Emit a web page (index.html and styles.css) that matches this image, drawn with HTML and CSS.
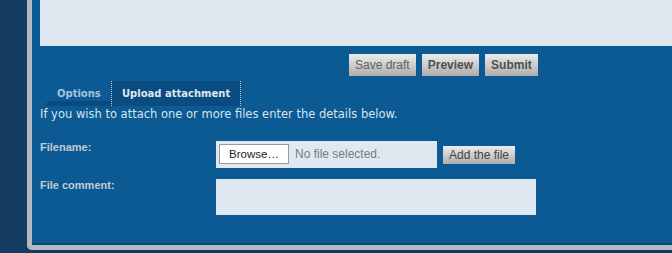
FILE: index.html
```html
<!DOCTYPE html>
<html>
<head>
<meta charset="utf-8">
<link rel="stylesheet" href="styles.css">
</head>
<body>
<div class="frame">
  <div class="panel">
    <div class="message-box"></div>
    <div class="actions">
      <span class="btn">Save draft</span>
      <span class="btn bold">Preview</span>
      <span class="btn bold">Submit</span>
    </div>
    <ul class="tabs">
      <li class="tab">Options</li>
      <li class="tab active">Upload attachment</li>
    </ul>
    <p class="intro">If you wish to attach one or more files enter the details below.</p>
    <div class="row row-file">
      <div class="label">Filename:</div>
      <div class="file-box">
        <span class="browse">Browse…</span>
        <span class="nofile">No file selected.</span>
      </div>
      <span class="btn add">Add the file</span>
    </div>
    <div class="row row-comment">
      <div class="label">File comment:</div>
      <div class="comment-box"></div>
    </div>
  </div>
</div>
</body>
</html>
```
FILE: styles.css
```css
html, body {
  margin: 0;
  padding: 0;
}
body {
  background: #143c63;
  width: 672px;
  height: 253px;
  overflow: hidden;
}
.frame {
  margin-left: 27px;
  width: 645px;
  box-sizing: border-box;
  border-left: 5px solid #b5b8bd;
  border-bottom: 5px solid #b5b8bd;
  border-bottom-left-radius: 5px;
}
.panel {
  height: 245px;
  box-sizing: border-box;
  background: #0b5a93;
  border-bottom: 2px solid #0a4a7a;
  padding-left: 8px;
}
.message-box {
  height: 46px;
  background: #dfe8f1;
}
.actions {
  display: flex;
  gap: 6px;
  margin-top: 8px;
  margin-left: 309px;
  height: 22px;
}
.btn {
  display: flex;
  align-items: center;
  height: 22px;
  box-sizing: border-box;
  padding: 0 6px;
  font-family: "Liberation Sans", Arial, sans-serif;
  font-size: 12px;
  color: #606060;
  background: linear-gradient(#ececec, #d0d0d0 45%, #b9b9b9 80%, #aeaeae);
}
.btn.bold {
  font-weight: bold;
  color: #4e4e4e;
}
.tabs {
  list-style: none;
  margin: 5px 0 0 7px;
  padding: 0;
  display: flex;
  height: 25px;
}
.tab {
  font-family: "DejaVu Sans", Verdana, sans-serif;
  font-weight: bold;
  font-size: 10px;
  line-height: 12px;
  padding: 7px 0 0 10px;
  width: 54px;
  box-sizing: content-box;
  height: 13px;
  color: #a6c3df;
  border-bottom: 5px solid #0a4a7e;
}
.tab.active {
  width: auto;
  padding: 7px 10px 0 10px;
  height: 18px;
  border-bottom: none;
  background: #0a4b80;
  color: #dde7f1;
  border-left: 1px dotted #b8cde2;
  border-right: 1px dotted #b8cde2;
}
.intro {
  margin: 0;
  font-family: "DejaVu Sans", Verdana, sans-serif;
  font-size: 11.5px;
  line-height: 16px;
  height: 14px;
  color: #d7e3ef;
}
.row {
  display: flex;
  align-items: flex-start;
}
.row-file {
  margin-top: 21px;
  height: 27px;
}
.row-comment {
  margin-top: 11px;
}
.label {
  width: 176px;
  margin-top: 0;
  font-family: "Liberation Sans", Arial, sans-serif;
  font-weight: bold;
  font-size: 11px;
  line-height: 13px;
  color: #c3cbd4;
}
.file-box {
  width: 221px;
  height: 27px;
  box-sizing: border-box;
  background: #dfe8f1;
  padding: 3px;
  display: flex;
  align-items: flex-start;
}
.browse {
  width: 70px;
  height: 20px;
  box-sizing: border-box;
  background: #fff;
  border: 1px solid #9a9a9a;
  font-family: "Liberation Sans", Arial, sans-serif;
  font-size: 11.5px;
  line-height: 18px;
  color: #222;
  text-align: center;
}
.nofile {
  margin-left: 6px;
  font-family: "Liberation Sans", Arial, sans-serif;
  font-size: 12px;
  line-height: 20px;
  color: #7b7b7b;
}
.btn.add {
  margin-left: 6px;
  margin-top: 5px;
  height: 18px;
  color: #444;
}
.comment-box {
  width: 320px;
  height: 36px;
  background: #dfe8f1;
}
```
